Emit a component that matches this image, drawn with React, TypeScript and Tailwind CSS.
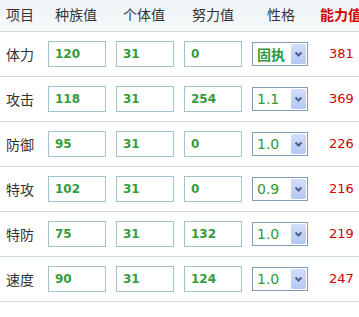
import React from "react";

interface StatRow {
  name: string;
  base: number;
  iv: number;
  ev: number;
  nature: string;
  value: number;
}

const rows: StatRow[] = [
  { name: "体力", base: 120, iv: 31, ev: 0, nature: "固执", value: 381 },
  { name: "攻击", base: 118, iv: 31, ev: 254, nature: "1.1", value: 369 },
  { name: "防御", base: 95, iv: 31, ev: 0, nature: "1.0", value: 226 },
  { name: "特攻", base: 102, iv: 31, ev: 0, nature: "0.9", value: 216 },
  { name: "特防", base: 75, iv: 31, ev: 132, nature: "1.0", value: 219 },
  { name: "速度", base: 90, iv: 31, ev: 124, nature: "1.0", value: 247 },
];

const cjk = "font-['Noto_Sans_CJK_SC','Noto_Sans',sans-serif]";
const num = "font-['DejaVu_Sans','Noto_Sans_CJK_SC',sans-serif]";

function NumInput({ value }: { value: number }) {
  return (
    <div
      className={`flex h-[26px] w-[58px] items-center border border-[#a3c3ce] bg-white pl-[6px] text-[12px] font-bold text-[#349b3e] ${num}`}
    >
      {value}
    </div>
  );
}

function NatureSelect({ value }: { value: string }) {
  const isName = !/^\d/.test(value);
  return (
    <div className="flex h-[24px] w-[56px] items-stretch border border-[#7f9db9] bg-white">
      <div
        className={`flex flex-1 items-center pl-[4px] text-[#2f9a3a] ${
          isName ? `text-[14px] font-bold ${cjk}` : `text-[14px] ${num}`
        }`}
      >
        {value}
      </div>
      <div className="m-[1px] flex w-[15px] items-center justify-center rounded-[2px] bg-gradient-to-b from-[#d2defb] to-[#b4c8f6]">
        <svg width="9" height="7" viewBox="0 0 9 7">
          <path d="M1.5 1.5 L4.5 4.5 L7.5 1.5" fill="none" stroke="#4d6185" strokeWidth="2" />
        </svg>
      </div>
    </div>
  );
}

export default function App() {
  return (
    <div className="h-[317px] w-[359px] overflow-hidden bg-white">
      <div className="w-[380px]">
        <div
          className={`flex h-[32px] items-center border-b border-[#cfdce3] bg-gradient-to-b from-[#eef3f6] to-[#f8fafb] pb-[3px] text-[14px] text-[#333] ${cjk}`}
        >
          <div className="w-[48px] pl-[6px]">项目</div>
          <div className="w-[68px] pl-[7px]">种族值</div>
          <div className="w-[68px] pl-[7px]">个体值</div>
          <div className="w-[68px] pl-[8px]">努力值</div>
          <div className="w-[68px] pl-[15px]">性格</div>
          <div className="pl-0 font-bold text-[#d40000]">能力值</div>
        </div>
        {rows.map((r) => (
          <div key={r.name} className="flex h-[45px] items-center border-b border-[#cfdce3]">
            <div className={`w-[48px] pl-[6px] text-[14px] text-[#333] ${cjk}`}>{r.name}</div>
            <div className="w-[68px]">
              <NumInput value={r.base} />
            </div>
            <div className="w-[68px]">
              <NumInput value={r.iv} />
            </div>
            <div className="w-[68px]">
              <NumInput value={r.ev} />
            </div>
            <div className="w-[77px]">
              <NatureSelect value={r.nature} />
            </div>
            <div className={`text-[13px] text-[#d40000] ${num}`}>{r.value}</div>
          </div>
        ))}
      </div>
    </div>
  );
}
